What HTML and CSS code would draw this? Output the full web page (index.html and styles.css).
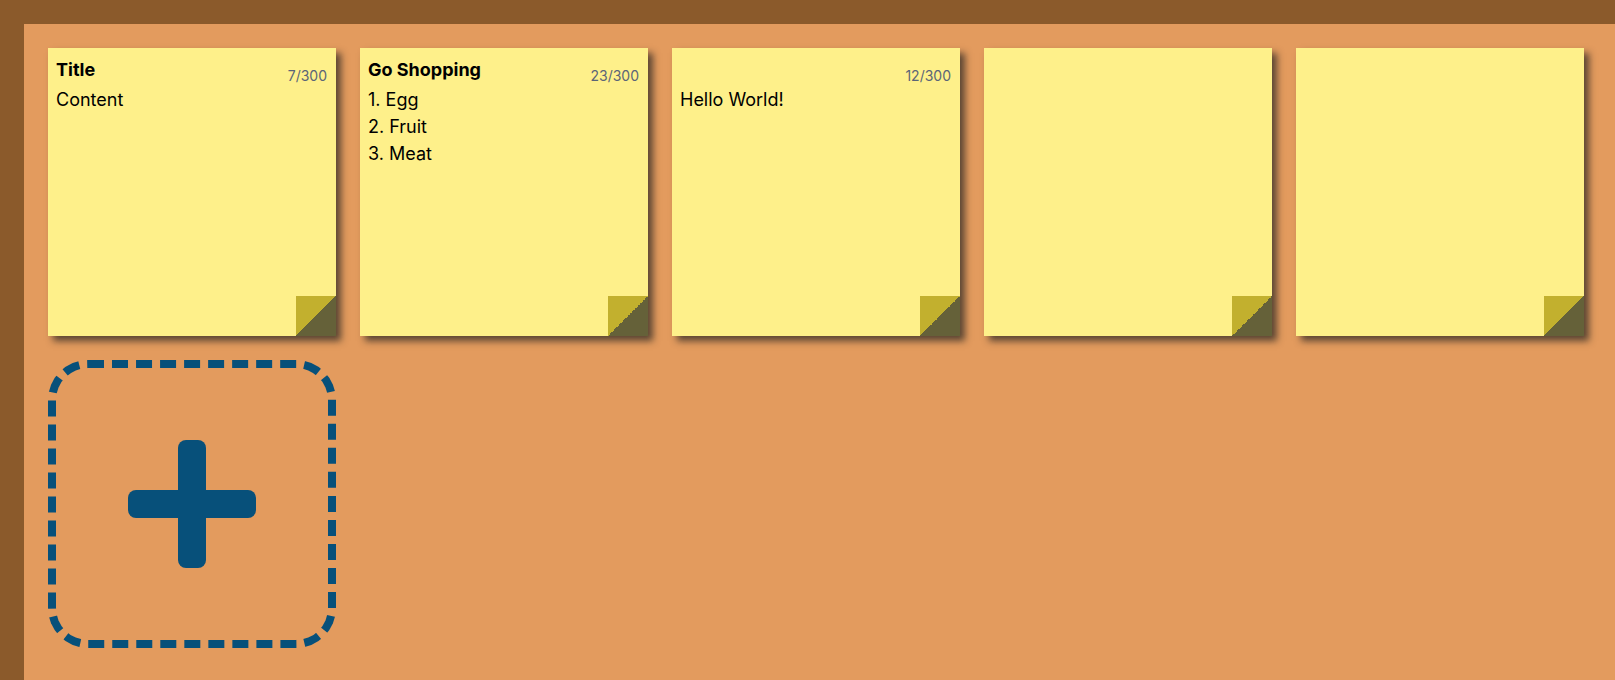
FILE: index.html
```html
<!DOCTYPE html>
<html lang="en">
<head>
<meta charset="utf-8">
<title>Sticky Notes</title>
<link rel="stylesheet" href="styles.css">
</head>
<body>
<main class="board">
  <div class="note">
    <div class="note-head">
      <span class="note-title">Title</span>
      <span class="note-count">7/300</span>
    </div>
    <div class="note-body">Content</div>
  </div>
  <div class="note">
    <div class="note-head">
      <span class="note-title">Go Shopping</span>
      <span class="note-count">23/300</span>
    </div>
    <div class="note-body">1. Egg<br>2. Fruit<br>3. Meat</div>
  </div>
  <div class="note">
    <div class="note-head">
      <span class="note-title"></span>
      <span class="note-count">12/300</span>
    </div>
    <div class="note-body">Hello World!</div>
  </div>
  <div class="note"></div>
  <div class="note"></div>
  <button class="add-note" type="button" aria-label="Add note">
    <svg width="128" height="128" viewBox="0 0 128 128" aria-hidden="true">
      <rect x="50" y="0" width="28" height="128" rx="8" fill="#07507a"/>
      <rect x="0" y="50" width="128" height="28" rx="8" fill="#07507a"/>
    </svg>
  </button>
</main>
</body>
</html>
```
FILE: styles.css
```css
* { box-sizing: border-box; }
html, body { margin: 0; }
body {
  min-height: 100vh;
  background: #e39b5e;
  border-top: 24px solid #8b5a2b;
  border-left: 24px solid #8b5a2b;
  font-family: Inter, "Liberation Sans", sans-serif;
  color: #000;
}
.board {
  display: flex;
  flex-wrap: wrap;
  align-content: flex-start;
  gap: 24px;
  padding: 24px;
}
.note {
  position: relative;
  width: 288px;
  height: 288px;
  padding: 8px 9px 8px 8px;
  background: #fef08a;
  box-shadow: 5px 5px 7px rgba(33, 33, 33, 0.7);
}
.note::after {
  content: "";
  position: absolute;
  right: 0;
  bottom: 0;
  width: 40px;
  height: 40px;
  background: linear-gradient(to bottom right, #c2b02e 50%, #656139 50%);
}
.note-head {
  display: flex;
  justify-content: space-between;
  align-items: flex-start;
  height: 30px;
}
.note-title {
  font-size: 18px;
  font-weight: 700;
  line-height: 27px;
}
.note-count {
  margin-top: 10px;
  font-size: 14px;
  line-height: 20px;
  color: #5b6577;
}
.note-body {
  font-size: 18px;
  line-height: 27px;
}
.add-note {
  display: flex;
  align-items: center;
  justify-content: center;
  width: 288px;
  height: 288px;
  padding: 0;
  background: transparent;
  border: 8px dashed #07507a;
  border-radius: 40px;
  cursor: pointer;
}
```
